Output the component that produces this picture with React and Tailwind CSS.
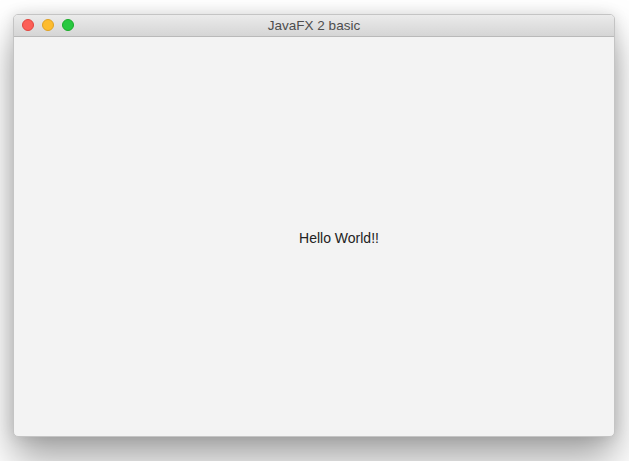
export default function App() {
  return (
    <div className="w-[629px] h-[461px] bg-white pt-[14px] pl-[13px] overflow-hidden" style={{ fontFamily: '"Liberation Sans", Arial, sans-serif' }}>
      <div className="w-[602px] h-[423px] flex flex-col rounded-[5px] border border-[#c4c4c4] bg-[#f3f3f3] shadow-[0_22px_38px_rgba(0,0,0,0.36),0_0_14px_rgba(0,0,0,0.12)] overflow-hidden">
        {/* Title bar */}
        <div className="relative h-[22px] flex items-center justify-center bg-gradient-to-b from-[#ebebeb] to-[#d5d5d5] border-b border-[#b9b9b9]">
          <div className="absolute left-[8px] top-[4px] flex gap-[8px]">
            <span className="w-[12px] h-[12px] rounded-full bg-[#fc5f57] border border-[#e0443e]" />
            <span className="w-[12px] h-[12px] rounded-full bg-[#fdbc2e] border border-[#dea123]" />
            <span className="w-[12px] h-[12px] rounded-full bg-[#28c840] border border-[#1aab29]" />
          </div>
          <span className="text-[13.5px] text-[#4d4d4d] leading-none pt-[1px]">JavaFX 2 basic</span>
        </div>
        {/* Content */}
        <div className="flex-1 flex items-center justify-center pl-[50px] pt-[3px]">
          <span className="text-[14px] text-[#222]">Hello World!!</span>
        </div>
      </div>
    </div>
  )
}
